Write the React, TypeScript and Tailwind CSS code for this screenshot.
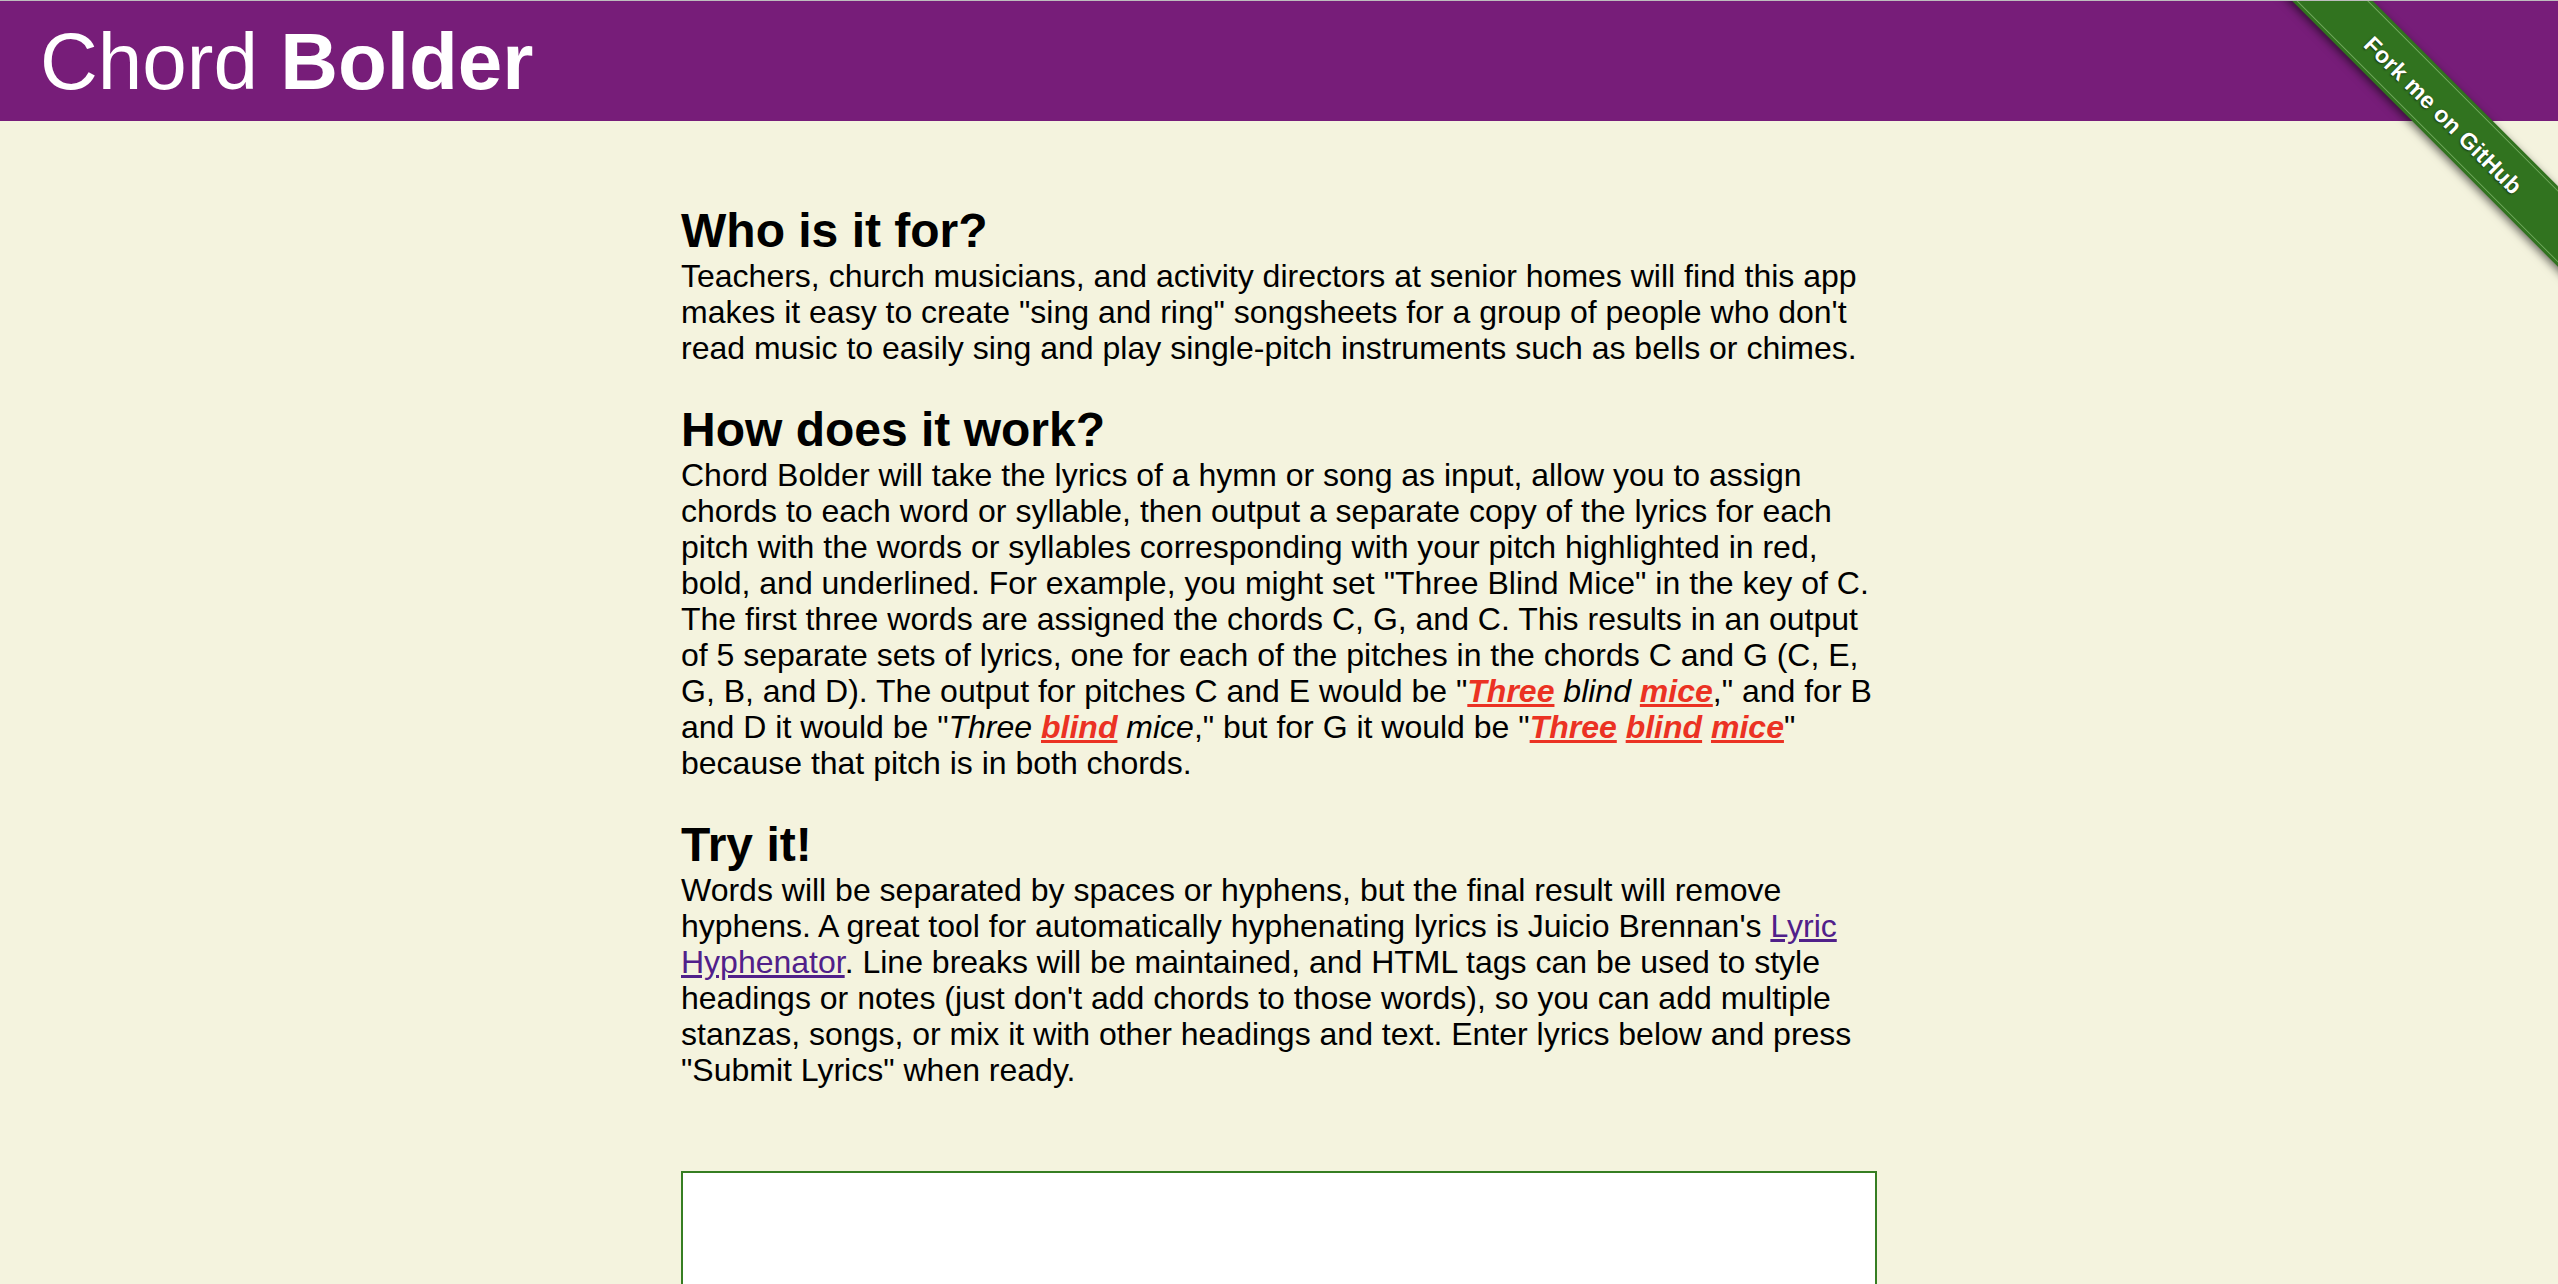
import React from 'react';

// highlighted pitch word: red, bold, underlined
const Hl: React.FC<{ children: React.ReactNode }> = ({ children }) => (
  <em className="font-bold text-[#eb3223] underline">{children}</em>
);

const ForkRibbon: React.FC = () => (
  <div className="pointer-events-none absolute right-0 top-0 h-[300px] w-[300px] overflow-hidden">
    <div className="absolute left-[-23px] top-[84px] flex h-[57px] w-[420px] rotate-45 items-center bg-[#31731f] shadow-[0_3px_8px_rgba(0,0,0,0.55)]">
      <div className="flex h-[51px] w-full items-center justify-center border-y border-[#8cc078]/70">
        <span className="mt-[6px] font-['Liberation_Sans',Arial,sans-serif] text-[23px] font-bold leading-none tracking-[0.3px] text-white [text-shadow:0_1px_2px_rgba(0,0,0,0.6)]">
          Fork me on GitHub
        </span>
      </div>
    </div>
  </div>
);

const App: React.FC = () => {
  return (
    <div className="relative min-h-screen border-t border-[#bdbdbd] bg-[#f4f3de] font-['Liberation_Sans',Arial,sans-serif] text-black">
      <header className="h-[120px] bg-[#771d79] pl-[40px]">
        <h1 className="text-[80px] leading-[122px] text-white">
          Chord <b>Bolder</b>
        </h1>
      </header>

      <ForkRibbon />

      <main className="mx-auto w-[1196px] pt-[82px] text-[32px] leading-[36px]">
        <h2 className="text-[48px] font-bold leading-[55px]">Who is it for?</h2>
        <p>
          Teachers, church musicians, and activity directors at senior homes will find this app makes it easy to
          create "sing and ring" songsheets for a group of people who don't read music to easily sing and play
          single-pitch instruments such as bells or chimes.
        </p>

        <h2 className="mt-9 text-[48px] font-bold leading-[55px]">How does it work?</h2>
        <p>
          Chord Bolder will take the lyrics of a hymn or song as input, allow you to assign chords to each word or
          syllable, then output a separate copy of the lyrics for each pitch with the words or syllables
          corresponding with your pitch highlighted in red, bold, and underlined. For example, you might set "Three
          Blind Mice" in the key of C. The first three words are assigned the chords C, G, and C. This results in an
          output of 5 separate sets of lyrics, one for each of the pitches in the chords C and G (C, E, G, B, and D).
          The output for pitches C and E would be "<Hl>Three</Hl> <em>blind</em> <Hl>mice</Hl>," and for B and D it
          would be "<em>Three</em> <Hl>blind</Hl> <em>mice</em>," but for G it would be "<Hl>Three</Hl>{' '}
          <Hl>blind</Hl> <Hl>mice</Hl>" because that pitch is in both chords.
        </p>

        <h2 className="mt-9 text-[48px] font-bold leading-[55px]">Try it!</h2>
        <p>
          Words will be separated by spaces or hyphens, but the final result will remove hyphens. A great tool for
          automatically hyphenating lyrics is Juicio Brennan's{' '}
          <a href="#" className="text-[#50208a] underline">
            Lyric Hyphenator
          </a>
          . Line breaks will be maintained, and HTML tags can be used to style headings or notes (just don't add
          chords to those words), so you can add multiple stanzas, songs, or mix it with other headings and text.
          Enter lyrics below and press "Submit Lyrics" when ready.
        </p>

        <textarea className="mt-[83px] block h-[320px] w-full resize-none border-2 border-[#367e22] bg-white p-2 text-[28px] outline-none" />
      </main>
    </div>
  );
};

export default App;
